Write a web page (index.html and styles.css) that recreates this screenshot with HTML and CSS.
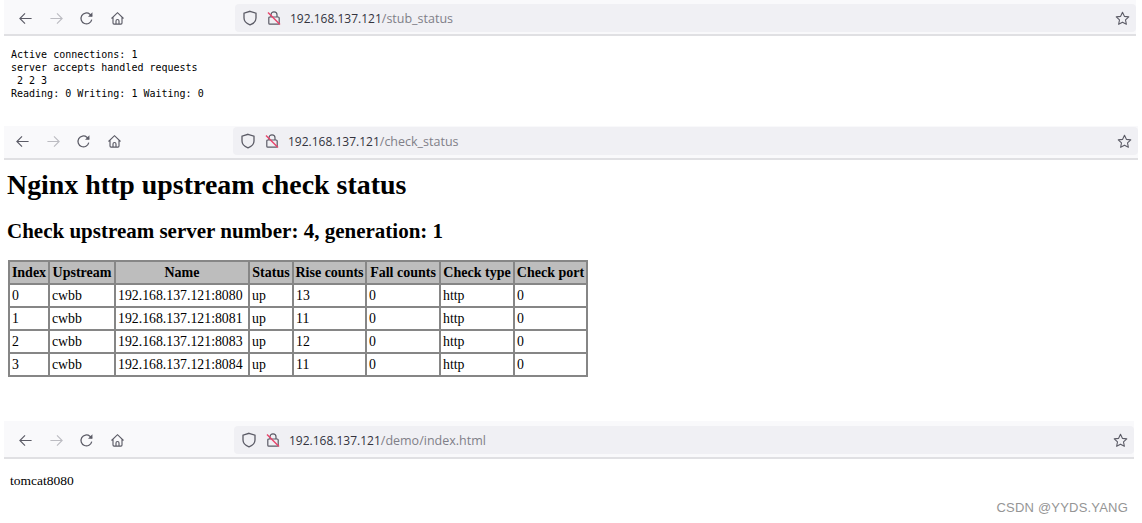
FILE: index.html
```html
<!DOCTYPE html>
<html lang="en">
<head>
<meta charset="utf-8">
<title>Nginx status</title>
<link rel="stylesheet" href="styles.css">
</head>
<body>
<svg class="defs" width="0" height="0" aria-hidden="true">
  <defs>
    <symbol id="i-back" viewBox="0 0 16 16"><path d="M14.500 8H2M7.500 2.500 2 8l5.500 5.500" fill="none" stroke="currentColor" stroke-width="1.2"/></symbol>
    <symbol id="i-forward" viewBox="0 0 16 16"><path d="M1.500 8H14M8.500 2.500 14 8l-5.500 5.500" fill="none" stroke="currentColor" stroke-width="1.2"/></symbol>
    <symbol id="i-reload" viewBox="0 0 16 16"><path d="M13.600 9.200A5.800 5.800 0 1 1 11.600 3.400L13.800 5.400" fill="none" stroke="currentColor" stroke-width="1.3"/><path d="M14.300 1.400v4.700H9.600z" fill="currentColor"/></symbol>
    <symbol id="i-home" viewBox="0 0 16 16"><path d="M1.600 8 8 1.800 14.400 8M3.200 6.800v6.100a1.100 1.100 0 0 0 1.100 1.100h7.400a1.100 1.100 0 0 0 1.100-1.100V6.800M6.400 14v-3.400a1.600 1.600 0 0 1 3.200 0V14" fill="none" stroke="currentColor" stroke-width="1.2"/></symbol>
    <symbol id="i-shield" viewBox="0 0 16 16"><path d="M8 1.300 14 3.200V8c0 3.400-2.600 5.600-6 6.900C4.600 13.600 2 11.400 2 8V3.200z" fill="none" stroke="currentColor" stroke-width="1.300"/></symbol>
    <symbol id="i-lock" viewBox="0 0 16 16"><path d="M5 7V4.800a3 3 0 0 1 6 0V7M3.800 7h8.400a1 1 0 0 1 1 1v5.200a1 1 0 0 1-1 1H3.800a1 1 0 0 1-1-1V8a1 1 0 0 1 1-1z" fill="none" stroke="#5b5b66" stroke-width="1.2"/><path d="M2 2.500 14 14.500" fill="none" stroke="#e8436a" stroke-width="1.400"/></symbol>
    <symbol id="i-star" viewBox="0 0 16 16"><path d="M8 1.300 10 5.700l4.700.6-3.500 3.200.95 4.700L8 11.900l-4.150 2.300.95-4.700L1.300 6.300 6 5.700z" fill="none" stroke="currentColor" stroke-width="1.150" stroke-linejoin="round"/></symbol>
  </defs>
</svg>

<header class="toolbar toolbar-one">
  <nav class="nav">
    <svg class="icon"><use href="#i-back"/></svg>
    <svg class="icon icon-off"><use href="#i-forward"/></svg>
    <svg class="icon"><use href="#i-reload"/></svg>
    <svg class="icon"><use href="#i-home"/></svg>
  </nav>
  <div class="urlbar">
    <svg class="icon site"><use href="#i-shield"/></svg>
    <svg class="icon site"><use href="#i-lock"/></svg>
    <span class="url">192.168.137.121<span class="path">/stub_status</span></span>
    <svg class="icon star"><use href="#i-star"/></svg>
  </div>
</header>
<pre class="stub">Active connections: 1
server accepts handled requests
 2 2 3
Reading: 0 Writing: 1 Waiting: 0</pre>

<header class="toolbar toolbar-two">
  <nav class="nav">
    <svg class="icon"><use href="#i-back"/></svg>
    <svg class="icon icon-off"><use href="#i-forward"/></svg>
    <svg class="icon"><use href="#i-reload"/></svg>
    <svg class="icon"><use href="#i-home"/></svg>
  </nav>
  <div class="urlbar">
    <svg class="icon site"><use href="#i-shield"/></svg>
    <svg class="icon site"><use href="#i-lock"/></svg>
    <span class="url">192.168.137.121<span class="path">/check_status</span></span>
    <svg class="icon star"><use href="#i-star"/></svg>
  </div>
</header>
<main class="check">
  <h1>Nginx http upstream check status</h1>
  <h2>Check upstream server number: 4, generation: 1</h2>
  <table>
    <colgroup>
      <col class="c1"><col class="c2"><col class="c3"><col class="c4"><col class="c5"><col class="c6"><col class="c7"><col class="c8">
    </colgroup>
    <thead>
      <tr><th>Index</th><th>Upstream</th><th>Name</th><th>Status</th><th>Rise counts</th><th>Fall counts</th><th>Check type</th><th>Check port</th></tr>
    </thead>
    <tbody>
      <tr><td>0</td><td>cwbb</td><td>192.168.137.121:8080</td><td>up</td><td>13</td><td>0</td><td>http</td><td>0</td></tr>
      <tr><td>1</td><td>cwbb</td><td>192.168.137.121:8081</td><td>up</td><td>11</td><td>0</td><td>http</td><td>0</td></tr>
      <tr><td>2</td><td>cwbb</td><td>192.168.137.121:8083</td><td>up</td><td>12</td><td>0</td><td>http</td><td>0</td></tr>
      <tr><td>3</td><td>cwbb</td><td>192.168.137.121:8084</td><td>up</td><td>11</td><td>0</td><td>http</td><td>0</td></tr>
    </tbody>
  </table>
</main>

<header class="toolbar toolbar-three">
  <nav class="nav">
    <svg class="icon"><use href="#i-back"/></svg>
    <svg class="icon icon-off"><use href="#i-forward"/></svg>
    <svg class="icon"><use href="#i-reload"/></svg>
    <svg class="icon"><use href="#i-home"/></svg>
  </nav>
  <div class="urlbar">
    <svg class="icon site"><use href="#i-shield"/></svg>
    <svg class="icon site"><use href="#i-lock"/></svg>
    <span class="url">192.168.137.121<span class="path">/demo/index.html</span></span>
    <svg class="icon star"><use href="#i-star"/></svg>
  </div>
</header>
<footer class="demo">
  <p class="tomcat">tomcat8080</p>
  <p class="mark">CSDN @YYDS.YANG</p>
</footer>
</body>
</html>
```
FILE: styles.css
```css
* { box-sizing: border-box; }
html, body { margin: 0; padding: 0; }
body {
  width: 1142px;
  height: 523px;
  overflow: hidden;
  background: #fff;
  color: #000;
  font-family: "Liberation Serif", serif;
}
.defs { position: absolute; }

.toolbar {
  display: flex;
  align-items: center;
  margin-left: 4px;
  background: #f9f9fb;
  border-bottom: 2px solid #e0e0e3;
  color: #5b5b66;
}
.toolbar-one { height: 36px; padding-top: 2px; margin-right: 6px; }
.toolbar-two { height: 34px; margin-right: 4px; align-items: flex-start; padding-top: 1px; }
.toolbar-three { height: 38px; padding-top: 2px; margin-right: 8px; }

.nav {
  display: flex;
  align-items: center;
  gap: 15.5px;
  width: 231px;
  padding-left: 14px;
}
.toolbar-two .nav { width: 229px; padding-left: 11px; padding-top: 7px; }
.toolbar-three .nav { width: 230px; padding-left: 14px; }

.icon { width: 15px; height: 15px; flex: none; }
.icon-off { color: #bcbcc2; }
.site { width: 16px; height: 16px; }
.site + .site { margin-left: -2px; }

.urlbar {
  flex: 1;
  display: flex;
  align-items: center;
  gap: 10px;
  height: 28px;
  padding: 0 6px 0 7px;
  background: #f0f0f4;
  border-radius: 4px;
}
.url {
  flex: 1;
  font: 12px "Open Sans", sans-serif;
  color: #33333d;
  white-space: nowrap;
  margin-left: -2px;
}
.path { color: #7f7f88; font-size: 12.5px; }
.star { width: 15px; height: 15px; }

.stub {
  margin: 0;
  padding: 12px 0 0 11px;
  height: 90px;
  font: 10px/13px "DejaVu Sans Mono", monospace;
}

.check { padding-left: 8px; height: 261px; }
h1 {
  margin: 0 0 0 -1px;
  padding-top: 9px;
  font-size: 27.9px;
  line-height: 32px;
  font-weight: 700;
}
h2 {
  margin: 0 0 0 -1px;
  padding-top: 17px;
  font-size: 21px;
  line-height: 26px;
  font-weight: 700;
}
table {
  margin-top: 16px;
  width: 580px;
  table-layout: fixed;
  border-collapse: collapse;
  border: 2px solid #868686;
  font-size: 13.8px;
  line-height: 16px;
}
th, td {
  border: 2px solid #868686;
  padding: 0 2px;
  height: 23px;
  white-space: nowrap;
  overflow: hidden;
}
th { background: #bdbdbd; padding: 0 1px; font-size: 14px; }
td { text-align: left; }
.c1 { width: 40px; }
.c2 { width: 66px; }
.c3 { width: 134px; }
.c4 { width: 44px; }
.c5 { width: 73px; }
.c6 { width: 74px; }
.c7 { width: 74px; }
.c8 { width: 73px; }

.demo { position: relative; padding: 14px 0 0 10px; }
.tomcat { margin: 0; font-size: 13.5px; line-height: 15px; }
.mark {
  position: absolute;
  right: 14px;
  top: 41px;
  margin: 0;
  font: 13px "Liberation Sans", sans-serif;
  letter-spacing: .2px;
  color: #959595;
}
```
